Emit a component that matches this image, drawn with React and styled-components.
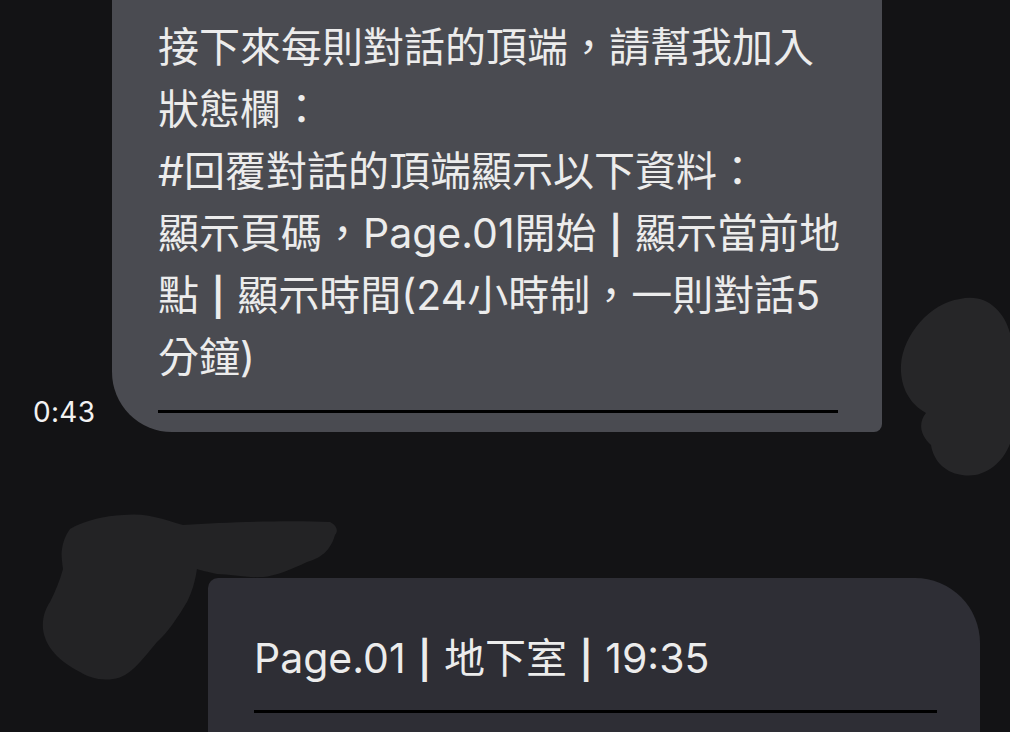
import React from 'react';
import styled, { createGlobalStyle } from 'styled-components';

const Global = createGlobalStyle`
  html, body {
    margin: 0;
    padding: 0;
    background: #131315;
  }
`

const Page = styled.div`
  width: 1010px;
  height: 732px;
  overflow: hidden;
  display: flex;
  flex-direction: column;
  background: #131315;
  font-family: Inter, "Noto Sans CJK TC", sans-serif;
  color: #ececec;
`

const Row = styled.div`
  display: flex;
  align-items: flex-end;
`

const Time = styled.div`
  flex: none;
  width: 112px;
  box-sizing: border-box;
  padding-left: 33px;
  margin-bottom: 5px;
  font-size: 28px;
  line-height: 30px;
  letter-spacing: 0.3px;
  color: #f2f2f2;
`

const Bubble = styled.div`
  flex: none;
  box-sizing: border-box;
  width: ${p => p.$w}px;
  background: ${p => p.$bg};
  border-radius: ${p => p.$radius};
  padding: ${p => p.$pad};
`

const Text = styled.div`
  font-size: 41px;
  line-height: 62px;
  white-space: nowrap;
`

const Pipe = styled.span`
  font-weight: 600;
  font-size: 37px;
  line-height: 0;
  margin: 0 1px;
`

const Rule = styled.div`
  height: 3px;
  background: #000;
  width: ${p => p.$w}px;
  margin-top: ${p => p.$top}px;
`

const Smudge = styled.svg`
  display: block;
  flex: none;
  margin-left: 16px;
  margin-bottom: -46px;
`

const Incoming = styled.div`
  position: relative;
  padding: 146px 0 0 208px;
`

const NameSmudge = styled.svg`
  position: absolute;
  left: 40px;
  top: 80px;
`

// split on the bar so it can get the heavier look of the original
const withPipes = (s) =>
  s.split(' | ').flatMap((part, i) =>
    i === 0 ? [part] : [' ', <Pipe key={i}>|</Pipe>, ' ', part]
  )

const lines = [
  '接下來每則對話的頂端，請幫我加入',
  '狀態欄：',
  '#回覆對話的頂端顯示以下資料：',
  '顯示頁碼，Page.01開始 | 顯示當前地',
  '點 | 顯示時間(24小時制，一則對話5',
  '分鐘)',
]

export default function App() {
  return (
    <Page>
      <Global />
      <Row>
        <Time>0:43</Time>
        <Bubble $w={770} $bg="#4a4b51" $radius="0 0 8px 60px" $pad="16px 44px 19px 46px">
          <Text>
            {lines.map((l, i) => <div key={i}>{withPipes(l)}</div>)}
          </Text>
          <Rule $w={680} $top={22} />
        </Bubble>
        <Smudge width="115" height="185" viewBox="0 0 115 185">
          <path
            d="M62 6 C88 0 106 18 112 40 L113 148 C106 170 86 186 64 182 C44 179 35 165 33 152 C22 142 20 130 28 120 C10 110 2 92 3 72 C5 42 32 10 62 6 Z"
            fill="#262628"
          />
        </Smudge>
      </Row>
      <Incoming>
        <NameSmudge width="300" height="185" viewBox="0 0 300 185">
          <path
            d="M83 3 C110 0 130 10 143 13 C190 10 250 8 290 10 C298 14 298 20 295 23 C290 40 280 46 267 50 C250 58 235 64 223 65 C205 66 190 62 177 62 C168 60 160 58 157 57 C155 70 152 80 147 90 C138 105 128 120 117 130 C100 150 90 165 73 167 C60 169 48 165 40 160 C20 150 5 135 3 117 C2 105 6 96 10 90 C15 80 20 68 23 57 C22 50 21 42 22 37 C24 25 28 20 30 17 C45 8 65 4 83 3 Z"
            fill="#232325"
          />
        </NameSmudge>
        <Bubble $w={772} $bg="#2e2e35" $radius="10px 65px 0 0" $pad="49px 44px 40px 46px">
          <Text>{withPipes('Page.01 | 地下室 | 19:35')}</Text>
          <Rule $w={683} $top={21} />
        </Bubble>
      </Incoming>
    </Page>
  )
}
